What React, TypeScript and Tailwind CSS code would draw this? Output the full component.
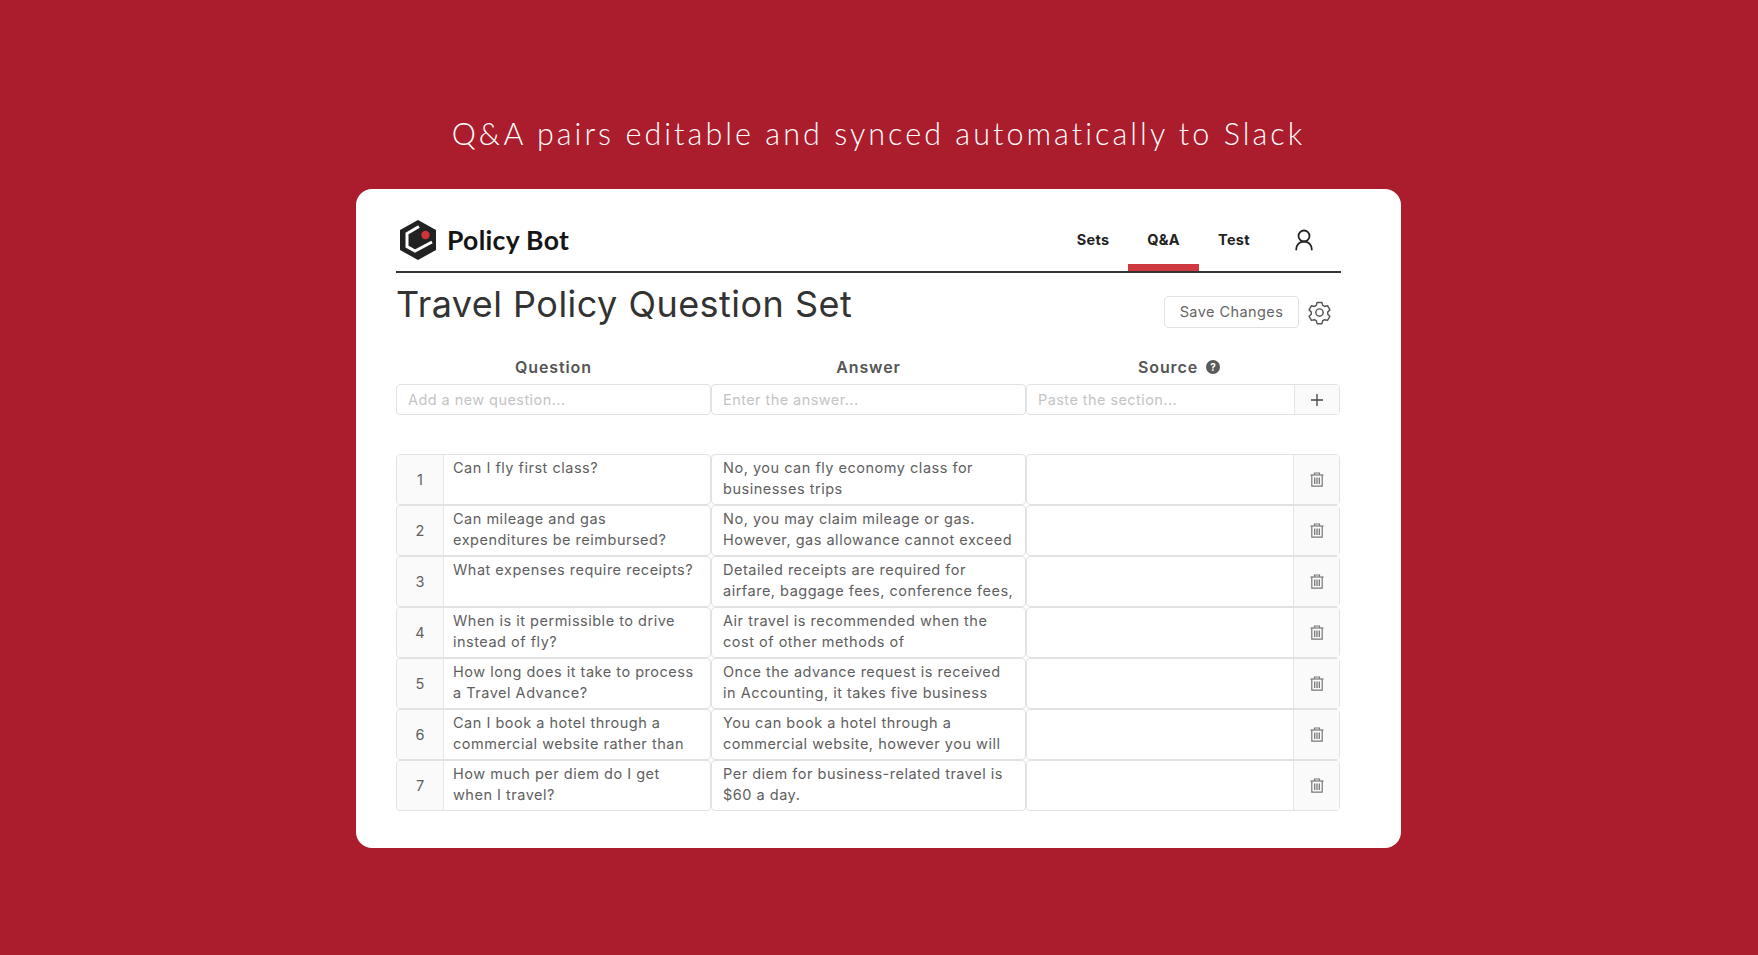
import React from "react";

const F = "font-['Inter','Liberation_Sans',sans-serif]";

const rows: [string[], string[]][] = [
  [["Can I fly first class?"], ["No, you can fly economy class for", "businesses trips"]],
  [["Can mileage and gas", "expenditures be reimbursed?"], ["No, you may claim mileage or gas.", "However, gas allowance cannot exceed"]],
  [["What expenses require receipts?"], ["Detailed receipts are required for", "airfare, baggage fees, conference fees,"]],
  [["When is it permissible to drive", "instead of fly?"], ["Air travel is recommended when the", "cost of other methods of"]],
  [["How long does it take to process", "a Travel Advance?"], ["Once the advance request is received", "in Accounting, it takes five business"]],
  [["Can I book a hotel through a", "commercial website rather than"], ["You can book a hotel through a", "commercial website, however you will"]],
  [["How much per diem do I get", "when I travel?"], ["Per diem for business-related travel is", "$60 a day."]],
];

function Logo() {
  return (
    <svg width="38" height="42" viewBox="0 0 38 42" className="shrink-0">
      <path d="M19 1 37 11V31L19 41 1 31V11Z" fill="#222" />
      <path d="M20 7.5 8 14.5V27.500L16 32 33 23" fill="none" stroke="#fff" strokeWidth="3" />
      <circle cx="26.500" cy="16" r="4.200" fill="#d1333a" />
    </svg>
  );
}

function UserIcon() {
  return (
    <svg width="18" height="22" viewBox="0 0 18 22" fill="none" stroke="#222" strokeWidth="1.800" strokeLinecap="round">
      <circle cx="9" cy="7" r="5.500" />
      <path d="M1.200 20.500c0-4.500 3-8 7.800-8s7.800 3.500 7.800 8" />
    </svg>
  );
}

function Gear() {
  return (
    <svg width="25" height="25" viewBox="0 0 24 24" fill="none" stroke="#555" strokeWidth="1.400" strokeLinejoin="round">
      <path d="M9.700 2.400h4.600l.8 2.800 1.800 1 2.800-.7 2.300 4-2.100 2v2.100l2.100 2-2.300 4-2.800-.7-1.800 1-.8 2.800H9.700l-.8-2.800-1.800-1-2.800.7-2.300-4 2.100-2v-2.100l-2.100-2 2.300-4 2.800.7 1.800-1z" />
      <circle cx="12" cy="12" r="3.500" />
    </svg>
  );
}

function Trash() {
  return (
    <svg width="14" height="15" viewBox="0 0 14 15" fill="none" stroke="#777" strokeWidth="1.200">
      <path d="M.5 3h13" />
      <path d="M4.500 2.800V1h5v1.800" />
      <path d="M1.800 3v11.200h10.400V3" />
      <path d="M4.700 5.500v6.500M7 5.500v6.500M9.300 5.500v6.500" strokeWidth="1.300" />
    </svg>
  );
}

const cellText = "text-[14.5px] leading-[20.5px] tracking-[0.035em] text-[#606060] whitespace-nowrap";
const box = "border border-[#e2e2e2] rounded-[4px]";

function Lines({ lines }: { lines: string[] }) {
  return (
    <>
      {lines.map((l) => (
        <div key={l}>{l}</div>
      ))}
    </>
  );
}

export default function App() {
  return (
    <div className={`${F} w-full h-[955px] bg-[#ab1c2c] flex flex-col items-center overflow-hidden`}>
      <div className="mt-[113px] h-[40px] leading-[40px] font-['Lato',sans-serif] font-light text-[30.5px] tracking-[0.1em] text-white whitespace-nowrap ml-[-1px]">
        Q&amp;A pairs editable and synced automatically to Slack
      </div>
      <div className="mt-[36px] w-[1045px] h-[659px] bg-white rounded-[16px] pl-[40px] pr-[60px] ml-[-1px]">
        <div className="h-[84px] flex items-end border-b-2 border-[#333] relative">
          <div className="flex items-center gap-[10px] absolute left-[3px] top-[30px]">
            <Logo />
            <span className="font-['Lato',sans-serif] font-bold text-[26.500px] leading-[34px] tracking-[0.012em] text-[#151515]">Policy Bot</span>
          </div>
          <div className="ml-auto flex items-start h-[54px] text-[14.500px] font-bold text-[#222] tracking-[0.02em]">
            <div className="w-[70px] text-center pt-[13px] leading-[20px]">Sets</div>
            <div className="w-[71px] h-full text-center pt-[13px] leading-[20px] border-b-[7px] border-[#cf3a41]">Q&amp;A</div>
            <div className="w-[70px] text-center pt-[13px] leading-[20px]">Test</div>
            <div className="w-[58px] pt-[12px] pl-[26px]"><UserIcon /></div>
            <div className="w-[14px]" />
          </div>
        </div>
        <div className="flex items-start justify-between h-[78px]">
          <h1 className="text-[36px] font-normal leading-[44px] mt-[9px] tracking-[0.013em] text-[#333] whitespace-nowrap">Travel Policy Question Set</h1>
          <div className="flex items-center gap-[8px] mt-[23px] mr-[9px]">
            <div className="h-[32px] w-[135px] flex items-center justify-center border border-[#e2e2e2] rounded-[4px] text-[14.500px] tracking-[0.03em] text-[#666]">Save Changes</div>
            <Gear />
          </div>
        </div>
        <div className="grid grid-cols-[315px_315px_314px] h-[33px] items-center text-[16px] font-semibold text-[#555] tracking-[0.055em] text-center">
          <div className="mt-[-1px]">Question</div>
          <div className="mt-[-1px]">Answer</div>
          <div className="flex items-center justify-center gap-[8px] pr-[8px] mt-[-1px]">
            Source
            <span className="w-[14px] h-[14px] rounded-full bg-[#5a5a5a] text-white text-[10px] font-bold leading-[14px] tracking-normal">?</span>
          </div>
        </div>
        <div className="grid grid-cols-[315px_315px_314px] h-[31px] text-[14.500px] tracking-[0.03em] text-[#c4c4c4]">
          <div className={`${box} pl-[11px] flex items-center`}>Add a new question...</div>
          <div className={`${box} pl-[11px] flex items-center`}>Enter the answer...</div>
          <div className={`${box} flex`}>
            <div className="flex-1 pl-[11px] flex items-center">Paste the section...</div>
            <div className="w-[45px] border-l border-[#e6e6e6] bg-[#fafafa] flex items-center justify-center">
              <svg width="12" height="12" viewBox="0 0 12 12" stroke="#444" strokeWidth="1.300"><path d="M6 0v12M0 6h12" /></svg>
            </div>
          </div>
        </div>
        <div className="mt-[39px] flex flex-col">
          {rows.map(([q, a], i) => (
            <div key={i} className="grid grid-cols-[315px_315px_314px] h-[51px]">
              <div className={`${box} flex overflow-hidden`}>
                <div className="w-[47px] shrink-0 border-r border-[#e6e6e6] bg-[#fafafa] flex items-center justify-center text-[14.500px] text-[#606060]">{i + 1}</div>
                <div className={`${cellText} pl-[9px] pt-[3px]`}><Lines lines={q} /></div>
              </div>
              <div className={`${box} overflow-hidden`}>
                <div className={`${cellText} pl-[11px] pt-[3px]`}><Lines lines={a} /></div>
              </div>
              <div className={`${box} flex`}>
                <div className="flex-1" />
                <div className="w-[46px] border-l border-[#e6e6e6] bg-[#fafafa] flex items-center justify-center"><Trash /></div>
              </div>
            </div>
          ))}
        </div>
      </div>
    </div>
  );
}
